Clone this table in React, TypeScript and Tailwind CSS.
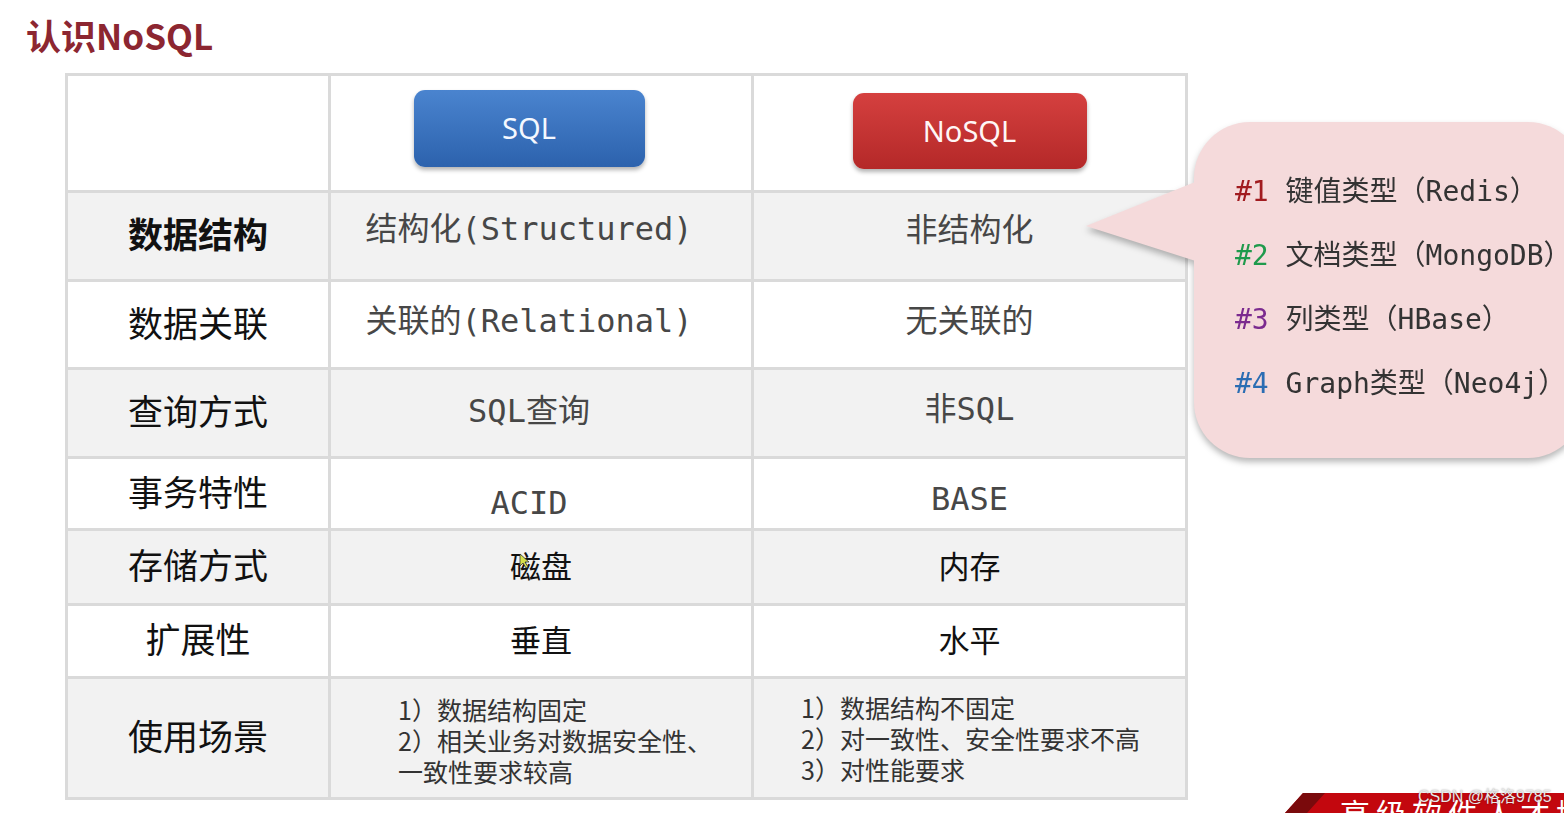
const mono = "font-['DejaVu_Sans_Mono','Noto_Sans_CJK_SC',monospace]";
const cjk = "font-['Noto_Sans_CJK_SC',sans-serif]";

type Row = {
  label: string;
  bold?: boolean;
  sql: string;
  nosql: string;
  plain?: boolean;
  gray: boolean;
  sqlClass?: string;
  nosqlClass?: string;
};

const rows: Row[] = [
  { label: "数据结构", bold: true, sql: "结构化(Structured)", nosql: "非结构化", gray: true, sqlClass: "pb-[14px]", nosqlClass: "pb-[12px]" },
  { label: "数据关联", sql: "关联的(Relational)", nosql: "无关联的", gray: false, sqlClass: "pb-[8px]", nosqlClass: "pb-[8px]" },
  { label: "查询方式", sql: "SQL查询", nosql: "非SQL", gray: true, sqlClass: "pb-[4px]", nosqlClass: "pb-[8px]" },
  { label: "事务特性", sql: "ACID", nosql: "BASE", gray: false, sqlClass: "pt-[18px]", nosqlClass: "pt-[10px]" },
  { label: "存储方式", sql: "磁盘", nosql: "内存", plain: true, gray: true },
  { label: "扩展性", sql: "垂直", nosql: "水平", plain: true, gray: false },
];

function Cell({ gray, className, children }: { gray: boolean; className?: string; children?: React.ReactNode }) {
  return (
    <div className={`flex items-center justify-center ${gray ? "bg-[#f2f2f2]" : "bg-white"} ${className ?? ""}`}>
      {children}
    </div>
  );
}

export default function App() {
  return (
    <div className="relative w-[1564px] h-[813px] overflow-hidden bg-white">
      <h1 className={`h-[73px] flex items-center pl-[26px] pb-[2px] text-[35px] font-bold text-[#8c2631] ${cjk}`}>认识NoSQL</h1>

      <div className="ml-[65px] w-[1123px] grid grid-cols-[260px_420px_431px] grid-rows-[114px_86px_85px_86px_69px_72px_70px_118px] gap-[3px] p-[3px] bg-[#dadada]">
        {/* header */}
        <Cell gray={false} />
        <Cell gray={false} className="pr-[24px] pb-[10px]">
          <div className="w-[231px] h-[77px] rounded-[11px] bg-gradient-to-b from-[#4a84cf] to-[#2c62ad] shadow-[0_3px_4px_rgba(0,0,0,0.3)] flex items-center justify-center text-[#f4f8ff] text-[29px] font-['Noto_Sans',sans-serif]">
            SQL
          </div>
        </Cell>
        <Cell gray={false} className="pb-[5px]">
          <div className="w-[234px] h-[76px] rounded-[11px] bg-gradient-to-b from-[#d5403f] to-[#b42828] shadow-[0_3px_4px_rgba(0,0,0,0.3)] flex items-center justify-center text-[#fff6f6] text-[29px] font-['Noto_Sans',sans-serif]">
            NoSQL
          </div>
        </Cell>

        {rows.map((r) => (
          <div key={r.label} className="contents">
            <Cell gray={r.gray} className="pb-[5px]">
              <span className={`text-[35px] text-[#111] ${cjk} ${r.bold ? "font-bold" : ""}`}>{r.label}</span>
            </Cell>
            <Cell gray={r.gray} className={`${r.plain ? "pb-[4px]" : "pr-[24px]"} ${r.sqlClass ?? ""}`}>
              <span className={r.plain ? `text-[31px] text-[#111] ${cjk}` : `text-[32px] text-[#474747] ${mono}`}>{r.sql}</span>
            </Cell>
            <Cell gray={r.gray} className={`${r.plain ? "pb-[4px]" : ""} ${r.nosqlClass ?? ""}`}>
              <span className={r.plain ? `text-[31px] text-[#111] ${cjk}` : `text-[32px] text-[#474747] ${mono}`}>{r.nosql}</span>
            </Cell>
          </div>
        ))}

        {/* usage scenarios */}
        <Cell gray={true} className="pb-[5px]">
          <span className={`text-[35px] text-[#111] ${cjk}`}>使用场景</span>
        </Cell>
        <div className={`bg-[#f2f2f2] flex flex-col justify-center pl-[67px] pt-[4px] text-[25px] leading-[31px] text-[#333] ${cjk}`}>
          <span>1）数据结构固定</span>
          <span>2）相关业务对数据安全性、</span>
          <span>一致性要求较高</span>
        </div>
        <div className={`bg-[#f2f2f2] flex flex-col justify-center pl-[47px] text-[25px] leading-[31px] text-[#333] ${cjk}`}>
          <span>1）数据结构不固定</span>
          <span>2）对一致性、安全性要求不高</span>
          <span>3）对性能要求</span>
        </div>
      </div>

      {/* callout bubble */}
      <div className="absolute left-[1080px] top-[122px] w-[500px] h-[340px] drop-shadow-[0_4px_3px_rgba(0,0,0,0.28)]">
        <svg className="absolute left-0 top-0" width="130" height="160" viewBox="0 0 130 160">
          <polygon points="125,56 6,104 125,142" fill="#f5dadb" />
        </svg>
        <div className={`absolute left-[114px] top-0 w-[390px] h-[336px] rounded-[56px] bg-[#f5dadb] pl-[41px] pt-[38px] text-[28px] text-[#333] ${mono}`}>
          <div className="h-[64px] leading-[64px] whitespace-nowrap"><span className="text-[#a11b1f]">#1</span> 键值类型（Redis）</div>
          <div className="h-[64px] leading-[64px] whitespace-nowrap"><span className="text-[#1f9a4c]">#2</span> 文档类型（MongoDB）</div>
          <div className="h-[64px] leading-[64px] whitespace-nowrap"><span className="text-[#7b2a8f]">#3</span> 列类型（HBase）</div>
          <div className="h-[64px] leading-[64px] whitespace-nowrap"><span className="text-[#2b6db3]">#4</span> Graph类型（Neo4j）</div>
        </div>
      </div>

      {/* mouse cursor */}
      <svg className="absolute left-[519px] top-[553px]" width="12" height="16" viewBox="0 0 12 16">
        <polygon points="1,1 1,13 4,10 7,15 9,14 6,9 10,9" fill="#d6e04a" stroke="#333" strokeWidth="0.8" />
      </svg>

      {/* bottom right banner */}
      <div className="absolute left-[1285px] top-[793px] w-[290px] h-[20px] overflow-hidden">
        <svg className="absolute left-0 top-0" width="290" height="20" viewBox="0 0 290 20">
          <polygon points="18,0 290,0 290,20 0,20" fill="#c3070e" />
          <polygon points="18,0 40,0 22,20 0,20" fill="#7a0a0c" />
        </svg>
        <span className={`absolute left-[55px] top-[4px] text-[30px] leading-[30px] text-white tracking-[6px] whitespace-nowrap ${cjk}`}>高级软件人才培训</span>
      </div>
      <span className="absolute left-[1418px] top-[785px] text-[16px] text-[#e8e8e8] font-['Liberation_Sans','Noto_Sans_CJK_SC',sans-serif] [text-shadow:0_0_2px_rgba(0,0,0,0.4)]">CSDN @格洛9785</span>
    </div>
  );
}
